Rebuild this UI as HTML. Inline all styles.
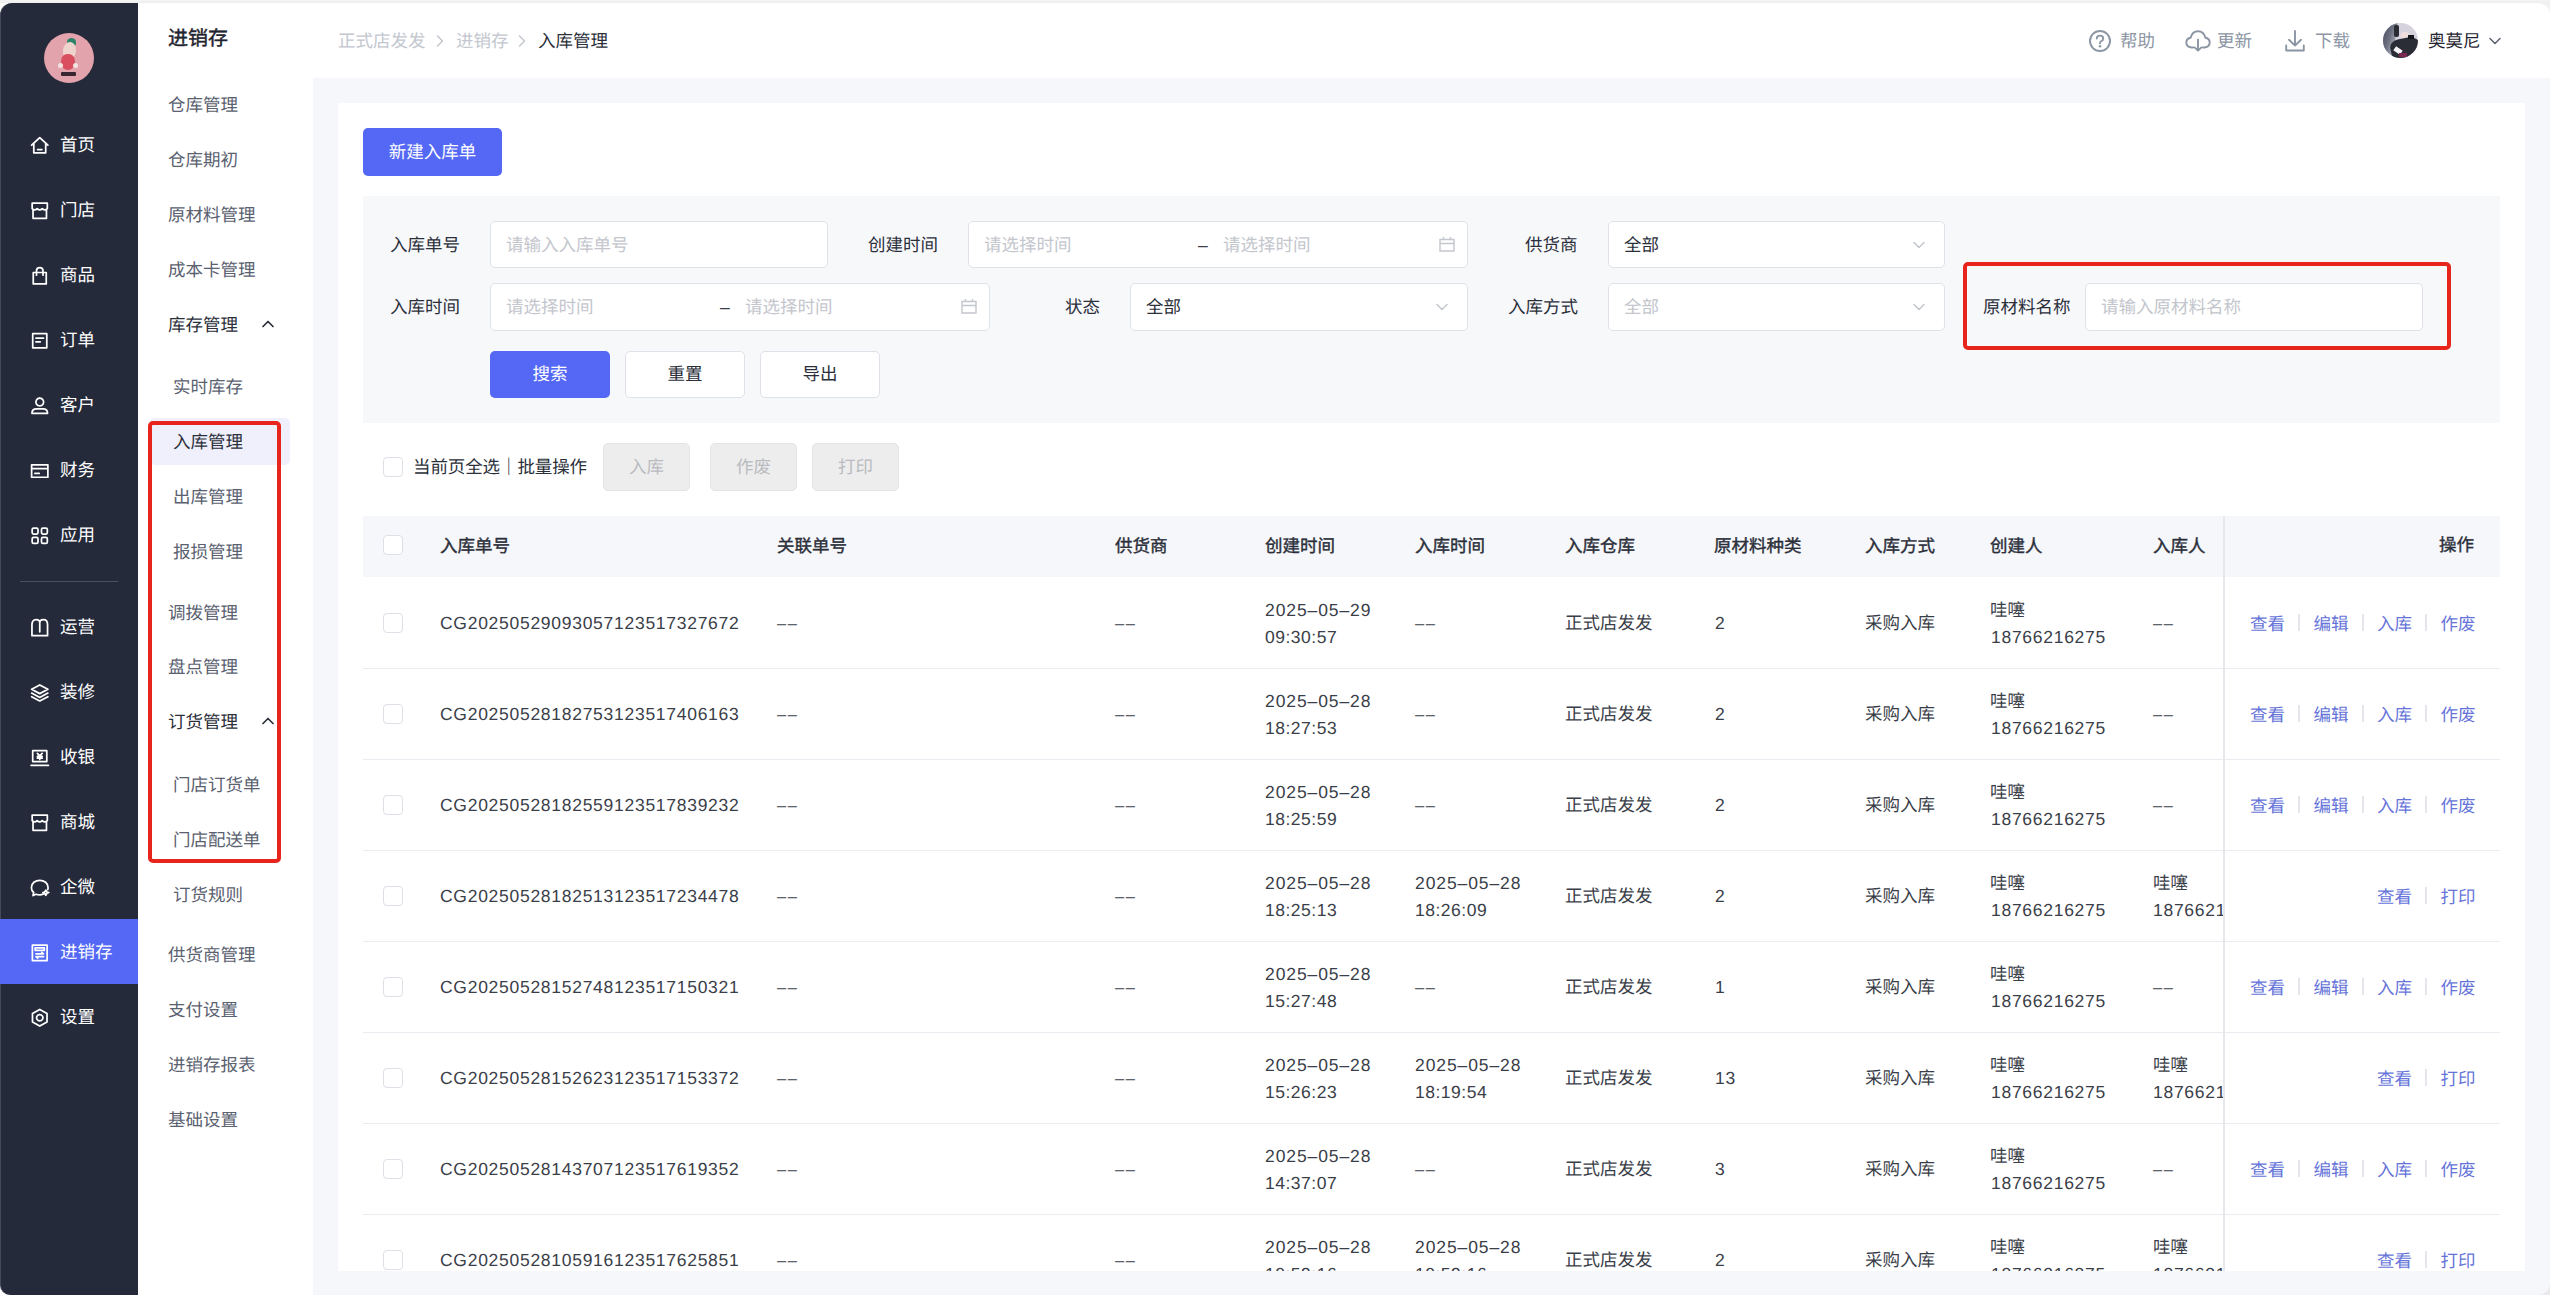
<!DOCTYPE html><html lang="zh-CN"><head><meta charset="utf-8"><title>入库管理</title><style>
*{box-sizing:border-box;margin:0;padding:0}
html,body{width:2550px;height:1295px;overflow:hidden;background:#fff}
body{text-rendering:geometricPrecision;font-family:"Liberation Sans",sans-serif;font-size:17.5px;color:#2b2f3a;position:relative;line-height:1}
.abs{position:absolute}
.t{position:absolute;white-space:nowrap;line-height:24px;height:24px}
#topstrip{left:0;top:0;width:2550px;height:3px;background:linear-gradient(#f4f4f4,#eeeeee)}
#side{left:0;top:3px;width:138px;height:1292px;background:#252a3b;border-left:1px solid #454a5b;border-top-left-radius:12px;border-bottom-left-radius:10px}
#nav2{left:138px;top:3px;width:175px;height:1292px;background:#fff}
#hdr{left:313px;top:3px;width:2237px;height:75px;background:#fff;border-top-right-radius:12px}
#content{left:313px;top:78px;width:2237px;height:1217px;background:#f5f7fa;border-bottom-right-radius:12px}
#card{left:338px;top:103px;width:2187px;height:1168px;background:#fff;overflow:hidden}
.sn{color:#fff;font-size:17.5px}
.n2{color:#5a6170;font-size:17.5px}
.n2.dark{color:#2b2f3a}
.lbl{color:#2b2f3a}
.inp{position:absolute;background:#fff;border:1px solid #dfe2e8;border-radius:5px;height:47px}
.ph{color:#c3c6cd}
.btn{position:absolute;border-radius:5px;height:48px;line-height:48px;text-align:center;font-size:17.5px}
.pri{background:#5468f5;color:#fff}
.def{background:#fff;border:1px solid #dfe2e8;color:#2b2f3a;line-height:45px;height:47px}
.dis{background:#ededed;border:1px solid #e4e4e4;color:#b9bbc0;line-height:46px}
.cb{position:absolute;width:20px;height:20px;border:1px solid #dde0e6;border-radius:4px;background:#fff}
.th{font-weight:500;-webkit-text-stroke:0.4px #2b2f3a;color:#2b2f3a}
.td{color:#3a3e48}
.num{letter-spacing:0.72px}
.lk{color:#6674d9}
.sep{position:absolute;width:2px;height:17px;background:#e4e6ec}
.redbox{position:absolute;border:4px solid #e8251c;border-radius:5px}
svg{position:absolute;overflow:visible}
</style></head><body>
<div class="abs" id="topstrip"></div><div class="abs" style="left:2530px;top:3px;width:20px;height:20px;background:#f1f1f1"></div><div class="abs" style="left:2530px;top:1275px;width:20px;height:20px;background:#e9e9ec"></div>
<div class="abs" id="side"></div><div class="abs" id="nav2"></div><div class="abs" id="hdr"></div><div class="abs" id="content"></div><div class="abs" id="card"></div>
<div class="abs" style="left:44px;top:33px;width:50px;height:50px;border-radius:50%;background:#e2a3ac;overflow:hidden"><div class="abs" style="left:23px;top:5px;width:9px;height:8px;background:#2c8468;border-radius:50% 50% 30% 30%"></div><div class="abs" style="left:19px;top:9px;width:13px;height:17px;background:#efd3cd;border-radius:50% 50% 45% 45%;transform:rotate(8deg)"></div><div class="abs" style="left:17px;top:21px;width:14px;height:16px;background:#d94f5f;border-radius:45% 45% 50% 50%"></div><div class="abs" style="left:14px;top:30px;width:5px;height:5px;background:#f3e3df;border-radius:50%"></div><div class="abs" style="left:29px;top:30px;width:5px;height:5px;background:#f3e3df;border-radius:50%"></div><div class="abs" style="left:17px;top:39px;width:15px;height:4px;background:#3a2630;border-radius:1px"></div></div>
<div class="abs" style="left:0;top:919px;width:138px;height:65px;background:#5468f5"></div>
<div class="abs" style="left:20px;top:581px;width:98px;height:1px;background:#4a4f61"></div>
<svg style="left:30.25px;top:136.25px" width="19.5" height="19.5" viewBox="0 0 18 18"><path fill="none" stroke="#fff" stroke-width="1.6" stroke-linecap="round" stroke-linejoin="round" d="M1.5 8.5 L9 1.5 L16.5 8.5 M3.5 7 V15.5 H14.5 V7 M7 12.5 H11"/></svg>
<div class="t sn" style="left:60px;top:133px;">首页</div>
<svg style="left:30.25px;top:201.25px" width="19.5" height="19.5" viewBox="0 0 18 18"><path fill="none" stroke="#fff" stroke-width="1.6" stroke-linecap="round" stroke-linejoin="round" d="M2 2 H16 V7 M2 2 V7 M2 7 Q4.3 9.5 6.6 7 Q9 9.5 11.3 7 Q13.7 9.5 16 7 M2.8 8.5 V16 H15.2 V8.5"/></svg>
<div class="t sn" style="left:60px;top:198px;">门店</div>
<svg style="left:30.25px;top:266.25px" width="19.5" height="19.5" viewBox="0 0 18 18"><path fill="none" stroke="#fff" stroke-width="1.6" stroke-linecap="round" stroke-linejoin="round" d="M3 6 H15 V16.5 H3 Z M6 8.5 V4.5 Q6 1.5 9 1.5 Q12 1.5 12 4.5 V8.5"/></svg>
<div class="t sn" style="left:60px;top:263px;">商品</div>
<svg style="left:30.25px;top:331.25px" width="19.5" height="19.5" viewBox="0 0 18 18"><path fill="none" stroke="#fff" stroke-width="1.6" stroke-linecap="round" stroke-linejoin="round" d="M2.5 2.5 H15.5 V15.5 H2.5 Z M5.5 6.5 H12.5 M5.5 10 H9.5"/></svg>
<div class="t sn" style="left:60px;top:328px;">订单</div>
<svg style="left:30.25px;top:396.25px" width="19.5" height="19.5" viewBox="0 0 18 18"><path fill="none" stroke="#fff" stroke-width="1.6" stroke-linecap="round" stroke-linejoin="round" d="M9 2 A3.6 3.6 0 1 0 9.01 2 M1.8 16 Q1.8 11.8 6 11.8 H12 Q16.2 11.8 16.2 16 Z"/></svg>
<div class="t sn" style="left:60px;top:393px;">客户</div>
<svg style="left:30.25px;top:461.25px" width="19.5" height="19.5" viewBox="0 0 18 18"><path fill="none" stroke="#fff" stroke-width="1.6" stroke-linecap="round" stroke-linejoin="round" d="M1.5 3.5 H16.5 V15 H1.5 Z M1.5 7 H16.5 M4.5 11.5 H8.5"/></svg>
<div class="t sn" style="left:60px;top:458px;">财务</div>
<svg style="left:30.25px;top:526.25px" width="19.5" height="19.5" viewBox="0 0 18 18"><g fill="none" stroke="#fff" stroke-width="1.6" stroke-linecap="round" stroke-linejoin="round"><rect x="2" y="2" width="5.4" height="5.4" rx="1.3"/><rect x="10.6" y="2" width="5.4" height="5.4" rx="1.3"/><rect x="2" y="10.6" width="5.4" height="5.4" rx="1.3"/><rect x="10.6" y="10.6" width="5.4" height="5.4" rx="1.3"/></g></svg>
<div class="t sn" style="left:60px;top:523px;">应用</div>
<svg style="left:30.25px;top:618.25px" width="19.5" height="19.5" viewBox="0 0 18 18"><path fill="none" stroke="#fff" stroke-width="1.6" stroke-linecap="round" stroke-linejoin="round" d="M1.8 16.3 V6.3 Q1.8 1.6 5.6 1.6 Q9 1.6 9 4.6 Q9 1.6 12.4 1.6 Q16.2 1.6 16.2 6.3 V16.3 Z M9 4.6 V12.8"/></svg>
<div class="t sn" style="left:60px;top:615px;">运营</div>
<svg style="left:30.25px;top:683.25px" width="19.5" height="19.5" viewBox="0 0 18 18"><path fill="none" stroke="#fff" stroke-width="1.6" stroke-linecap="round" stroke-linejoin="round" d="M9 1.8 L16.5 5.8 L9 9.8 L1.5 5.8 Z M1.5 9.3 L9 13.3 L16.5 9.3 M1.5 12.6 L9 16.6 L16.5 12.6"/></svg>
<div class="t sn" style="left:60px;top:680px;">装修</div>
<svg style="left:30.25px;top:748.25px" width="19.5" height="19.5" viewBox="0 0 18 18"><path fill="none" stroke="#fff" stroke-width="1.6" stroke-linecap="round" stroke-linejoin="round" d="M2.5 2.5 H15.5 V12.5 H2.5 Z M1 16 H17 M6.8 5 L9 7.3 L11.2 5 M9 7.3 V10.5 M6.8 7.8 H11.2 M6.8 9.4 H11.2"/></svg>
<div class="t sn" style="left:60px;top:745px;">收银</div>
<svg style="left:30.25px;top:813.25px" width="19.5" height="19.5" viewBox="0 0 18 18"><path fill="none" stroke="#fff" stroke-width="1.6" stroke-linecap="round" stroke-linejoin="round" d="M2 2 H16 V7 M2 2 V7 M2 7 Q4.3 9.5 6.6 7 Q9 9.5 11.3 7 Q13.7 9.5 16 7 M2.8 8.5 V16 H15.2 V8.5"/></svg>
<div class="t sn" style="left:60px;top:810px;">商城</div>
<svg style="left:30.25px;top:878.25px" width="19.5" height="19.5" viewBox="0 0 18 18"><path fill="none" stroke="#fff" stroke-width="1.6" stroke-linecap="round" stroke-linejoin="round" d="M12.5 14.8 Q10.8 15.6 9 15.6 Q7.2 15.6 5.7 15 L2.8 16.2 L3.4 13.4 Q1.3 11.6 1.3 8.9 Q1.3 5.8 3.6 3.9 Q5.9 2.2 9 2.2 Q12.1 2.2 14.4 3.9 Q16.7 5.8 16.7 8.9 Q16.7 9.8 16.4 10.6 M14.6 11.2 L15.7 12.9 L17.4 13.4 L15.7 14 L14.6 15.9 L13.6 14 L11.9 13.4 L13.6 12.9 Z"/></svg>
<div class="t sn" style="left:60px;top:875px;">企微</div>
<svg style="left:30.25px;top:943.25px" width="19.5" height="19.5" viewBox="0 0 18 18"><path fill="none" stroke="#fff" stroke-width="1.6" stroke-linecap="round" stroke-linejoin="round" d="M2.2 2 H15.8 V16.2 H2.2 Z M4.8 4.6 H13.2 V6.8 H4.8 Z M5.5 10 H12.5 L10.9 8.6 M12.5 12.6 H5.5 L7.1 14"/></svg>
<div class="t sn" style="left:60px;top:940px;">进销存</div>
<svg style="left:30.25px;top:1008.25px" width="19.5" height="19.5" viewBox="0 0 18 18"><path fill="none" stroke="#fff" stroke-width="1.6" stroke-linecap="round" stroke-linejoin="round" d="M9 1.3 L15.7 5.1 V12.9 L9 16.7 L2.3 12.9 V5.1 Z M9 6.1 A2.9 2.9 0 1 0 9.01 6.1"/></svg>
<div class="t sn" style="left:60px;top:1005px;">设置</div>
<div class="t " style="left:168px;top:26.5px;font-size:20px;font-weight:500;-webkit-text-stroke:0.45px #1f2430;color:#1f2430">进销存</div>
<div class="abs" style="left:150px;top:418px;width:140px;height:47px;background:#eff0fb;border-radius:5px"></div>
<div class="t n2" style="left:168px;top:93px;">仓库管理</div>
<div class="t n2" style="left:168px;top:148px;">仓库期初</div>
<div class="t n2" style="left:168px;top:203px;">原材料管理</div>
<div class="t n2" style="left:168px;top:258px;">成本卡管理</div>
<div class="t n2 dark" style="left:168px;top:313px;">库存管理</div>
<svg style="left:262px;top:318px" width="12" height="12" viewBox="0 0 12 12"><path d="M1 8.5 L6 3.5 L11 8.5" fill="none" stroke="#2b2f3a" stroke-width="1.7" stroke-linecap="round" stroke-linejoin="round"/></svg>
<div class="t n2" style="left:173px;top:375px;">实时库存</div>
<div class="t n2 dark" style="left:173px;top:430px;">入库管理</div>
<div class="t n2" style="left:173px;top:485px;">出库管理</div>
<div class="t n2" style="left:173px;top:540px;">报损管理</div>
<div class="t n2" style="left:168px;top:601px;">调拨管理</div>
<div class="t n2" style="left:168px;top:655px;">盘点管理</div>
<div class="t n2 dark" style="left:168px;top:710px;">订货管理</div>
<svg style="left:262px;top:715px" width="12" height="12" viewBox="0 0 12 12"><path d="M1 8.5 L6 3.5 L11 8.5" fill="none" stroke="#2b2f3a" stroke-width="1.7" stroke-linecap="round" stroke-linejoin="round"/></svg>
<div class="t n2" style="left:173px;top:773px;">门店订货单</div>
<div class="t n2" style="left:173px;top:828px;">门店配送单</div>
<div class="t n2" style="left:173px;top:883px;">订货规则</div>
<div class="t n2" style="left:168px;top:943px;">供货商管理</div>
<div class="t n2" style="left:168px;top:998px;">支付设置</div>
<div class="t n2" style="left:168px;top:1053px;">进销存报表</div>
<div class="t n2" style="left:168px;top:1108px;">基础设置</div>
<div class="redbox" style="left:148px;top:421px;width:133px;height:442px"></div>
<div class="t " style="left:338px;top:29px;color:#c3c7cf">正式店发发</div>
<div class="t " style="left:456px;top:29px;color:#c3c7cf">进销存</div>
<div class="t " style="left:538px;top:29px;color:#2b2f3a">入库管理</div>
<svg style="left:436px;top:35px" width="8" height="12" viewBox="0 0 8 12"><path d="M1.5 1 L6.5 6 L1.5 11" fill="none" stroke="#c3c7cf" stroke-width="1.5" stroke-linecap="round" stroke-linejoin="round"/></svg>
<svg style="left:518px;top:35px" width="8" height="12" viewBox="0 0 8 12"><path d="M1.5 1 L6.5 6 L1.5 11" fill="none" stroke="#c3c7cf" stroke-width="1.5" stroke-linecap="round" stroke-linejoin="round"/></svg>
<svg style="left:2089px;top:30px" width="22" height="22" viewBox="0 0 22 22"><circle cx="11" cy="11" r="10" fill="none" stroke="#8b95a4" stroke-width="1.9" stroke-linecap="round" stroke-linejoin="round"/><path fill="none" stroke="#8b95a4" stroke-width="1.9" stroke-linecap="round" stroke-linejoin="round" d="M7.8 8.6 Q7.8 5.6 11 5.6 Q14.2 5.6 14.2 8.4 Q14.2 10.2 12.4 11 Q11 11.7 11 13.2"/><circle cx="11" cy="16.2" r="1.2" fill="#8b95a4"/></svg>
<div class="t " style="left:2120px;top:29px;color:#8b95a4">帮助</div>
<svg style="left:2185px;top:30px" width="26" height="22" viewBox="0 0 26 22"><path fill="none" stroke="#8b95a4" stroke-width="1.9" stroke-linecap="round" stroke-linejoin="round" d="M8 17.5 H6.3 Q1.3 17 1.3 12.3 Q1.6 8.3 5.6 7.7 Q7.3 1.3 13 1.3 Q18.7 1.3 20.4 7.7 Q24.4 8.3 24.7 12.3 Q24.7 17 19.7 17.5 H18 M13 9.5 V20.5 M9.6 17.4 L13 20.6 L16.4 17.4"/></svg>
<div class="t " style="left:2217px;top:29px;color:#8b95a4">更新</div>
<svg style="left:2285px;top:30px" width="20" height="22" viewBox="0 0 20 22"><path fill="none" stroke="#8b95a4" stroke-width="1.9" stroke-linecap="round" stroke-linejoin="round" d="M10 1 V15.5 M4 9.8 L10 15.6 L16 9.8 M1.2 15.5 V20.5 H18.8 V15.5"/></svg>
<div class="t " style="left:2315px;top:29px;color:#8b95a4">下载</div>
<div class="abs" style="left:2383px;top:23px;width:35px;height:35px;border-radius:50%;background:#d6d3df;overflow:hidden"><div class="abs" style="left:-4px;top:-2px;width:16px;height:40px;background:linear-gradient(100deg,#3f4454 0,#6b7080 55%,#b9bbc8 100%);transform:rotate(8deg)"></div><div class="abs" style="left:11px;top:2px;width:5px;height:12px;background:#2a2b33;border-radius:2px"></div><div class="abs" style="left:17px;top:9px;width:10px;height:7px;background:#f0dede;border-radius:50%"></div><div class="abs" style="left:8px;top:15px;width:30px;height:24px;background:#2b2d36;border-radius:30% 40% 0 40%;transform:rotate(-12deg)"></div><div class="abs" style="left:11px;top:25px;width:8px;height:5px;background:#f4f4f6;transform:rotate(35deg)"></div><div class="abs" style="left:25px;top:12px;width:6px;height:4px;background:#17181d"></div><div class="abs" style="left:16px;top:30px;width:8px;height:4px;background:#7a2a52"></div></div>
<div class="t " style="left:2428px;top:29px;color:#1f2430">奥莫尼</div>
<svg style="left:2489px;top:37px" width="12" height="8" viewBox="0 0 12 8"><path d="M1 1.5 L6 6.5 L11 1.5" fill="none" stroke="#5a6170" stroke-width="1.5" stroke-linecap="round" stroke-linejoin="round"/></svg>
<div class="btn pri" style="left:363px;top:128px;width:139px">新建入库单</div>
<div class="abs" style="left:363px;top:196px;width:2137px;height:227px;background:#f7f8fa"></div>
<div class="t lbl" style="left:390px;top:233px;">入库单号</div>
<div class="inp" style="left:490px;top:221px;width:338px;height:47px"></div>
<div class="t ph" style="left:506px;top:233px;">请输入入库单号</div>
<div class="t lbl" style="left:868px;top:233px;">创建时间</div>
<div class="inp" style="left:968px;top:221px;width:500px;height:47px"></div>
<div class="t ph" style="left:984px;top:233px;">请选择时间</div>
<div class="t " style="left:1198px;top:233px;color:#3a3e48">–</div>
<div class="t ph" style="left:1223px;top:233px;">请选择时间</div>
<svg style="left:1439px;top:236px" width="16" height="16" viewBox="0 0 16 16"><path fill="none" stroke="#c3c6cd" stroke-width="1.4" d="M1 3.5 H15 V15 H1 Z M1 7.5 H15 M4.5 1 V4 M11.5 1 V4"/></svg>
<div class="t lbl" style="left:1525px;top:233px;">供货商</div>
<div class="inp" style="left:1608px;top:221px;width:337px;height:47px"></div>
<div class="t " style="left:1624px;top:233px;color:#2b2f3a">全部</div>
<svg style="left:1913px;top:241px" width="12" height="8" viewBox="0 0 12 8"><path d="M1 1.5 L6 6.5 L11 1.5" fill="none" stroke="#c3c6cd" stroke-width="1.5" stroke-linecap="round" stroke-linejoin="round"/></svg>
<div class="t lbl" style="left:390px;top:295px;">入库时间</div>
<div class="inp" style="left:490px;top:283px;width:500px;height:48px"></div>
<div class="t ph" style="left:506px;top:295px;">请选择时间</div>
<div class="t " style="left:720px;top:295px;color:#3a3e48">–</div>
<div class="t ph" style="left:745px;top:295px;">请选择时间</div>
<svg style="left:961px;top:298px" width="16" height="16" viewBox="0 0 16 16"><path fill="none" stroke="#c3c6cd" stroke-width="1.4" d="M1 3.5 H15 V15 H1 Z M1 7.5 H15 M4.5 1 V4 M11.5 1 V4"/></svg>
<div class="t lbl" style="left:1065px;top:295px;">状态</div>
<div class="inp" style="left:1130px;top:283px;width:338px;height:48px"></div>
<div class="t " style="left:1146px;top:295px;color:#2b2f3a">全部</div>
<svg style="left:1436px;top:303px" width="12" height="8" viewBox="0 0 12 8"><path d="M1 1.5 L6 6.5 L11 1.5" fill="none" stroke="#c3c6cd" stroke-width="1.5" stroke-linecap="round" stroke-linejoin="round"/></svg>
<div class="t lbl" style="left:1508px;top:295px;">入库方式</div>
<div class="inp" style="left:1608px;top:283px;width:337px;height:48px"></div>
<div class="t ph" style="left:1624px;top:295px;">全部</div>
<svg style="left:1913px;top:303px" width="12" height="8" viewBox="0 0 12 8"><path d="M1 1.5 L6 6.5 L11 1.5" fill="none" stroke="#c3c6cd" stroke-width="1.5" stroke-linecap="round" stroke-linejoin="round"/></svg>
<div class="t lbl" style="left:1983px;top:295px;">原材料名称</div>
<div class="inp" style="left:2085px;top:283px;width:338px;height:48px"></div>
<div class="t ph" style="left:2101px;top:295px;">请输入原材料名称</div>
<div class="redbox" style="left:1963px;top:262px;width:488px;height:88px"></div>
<div class="btn pri" style="left:490px;top:351px;width:120px;height:47px;line-height:47px">搜索</div>
<div class="btn def" style="left:625px;top:351px;width:120px">重置</div>
<div class="btn def" style="left:760px;top:351px;width:120px">导出</div>
<div class="cb" style="left:383px;top:457px"></div>
<div class="t lbl" style="left:413px;top:455px;letter-spacing:-0.1px">当前页全选｜批量操作</div>
<div class="btn dis" style="left:603px;top:443px;width:87px">入库</div>
<div class="btn dis" style="left:710px;top:443px;width:87px">作废</div>
<div class="btn dis" style="left:812px;top:443px;width:87px">打印</div>
<div class="abs" style="left:363px;top:516px;width:2137px;height:61px;background:#f6f7fb"></div>
<div class="cb" style="left:383px;top:535px"></div>
<div class="t th" style="left:440px;top:534px;">入库单号</div>
<div class="t th" style="left:777px;top:534px;">关联单号</div>
<div class="t th" style="left:1115px;top:534px;">供货商</div>
<div class="t th" style="left:1265px;top:534px;">创建时间</div>
<div class="t th" style="left:1415px;top:534px;">入库时间</div>
<div class="t th" style="left:1565px;top:534px;">入库仓库</div>
<div class="t th" style="left:1714px;top:534px;">原材料种类</div>
<div class="t th" style="left:1865px;top:534px;">入库方式</div>
<div class="t th" style="left:1990px;top:534px;">创建人</div>
<div class="t th" style="left:2153px;top:534px;">入库人</div>
<div class="t th" style="right:76px;top:533px;">操作</div>
<div class="abs" style="left:363px;top:577px;width:2137px;height:694px;overflow:hidden">
<div class="abs" style="left:-363px;top:-577px;width:2550px;height:1295px">
<div class="abs" style="left:363px;top:668px;width:2137px;height:1px;background:#eaecf1"></div>
<div class="cb" style="left:383px;top:613px"></div>
<div class="t td num" style="left:440px;top:611px;">CG20250529093057123517327672</div>
<div class="t td" style="left:777px;top:611px;"><span style="font-size:16.5px;letter-spacing:1.6px">––</span></div>
<div class="t td" style="left:1115px;top:611px;"><span style="font-size:16.5px;letter-spacing:1.6px">––</span></div>
<div class="t td num" style="left:1265px;top:598px;letter-spacing:0.9px">2025–05–29</div>
<div class="t td num" style="left:1265px;top:625px;letter-spacing:0.5px">09:30:57</div>
<div class="t td" style="left:1415px;top:611px;"><span style="font-size:16.5px;letter-spacing:1.6px">––</span></div>
<div class="t td" style="left:1565px;top:611px;">正式店发发</div>
<div class="t td num" style="left:1715px;top:611px;">2</div>
<div class="t td" style="left:1865px;top:611px;">采购入库</div>
<div class="t td" style="left:1990px;top:598px;">哇噻</div>
<div class="t td num" style="left:1991px;top:625px;">18766216275</div>
<div class="t td" style="left:2153px;top:611px;"><span style="font-size:16.5px;letter-spacing:1.6px">––</span></div>
<div class="t lk" style="left:2440.5px;top:612px;">作废</div>
<div class="sep" style="left:2425px;top:614px"></div>
<div class="t lk" style="left:2377.0px;top:612px;">入库</div>
<div class="sep" style="left:2361.5px;top:614px"></div>
<div class="t lk" style="left:2313.5px;top:612px;">编辑</div>
<div class="sep" style="left:2298.0px;top:614px"></div>
<div class="t lk" style="left:2250.0px;top:612px;">查看</div>
<div class="abs" style="left:363px;top:759px;width:2137px;height:1px;background:#eaecf1"></div>
<div class="cb" style="left:383px;top:704px"></div>
<div class="t td num" style="left:440px;top:702px;">CG20250528182753123517406163</div>
<div class="t td" style="left:777px;top:702px;"><span style="font-size:16.5px;letter-spacing:1.6px">––</span></div>
<div class="t td" style="left:1115px;top:702px;"><span style="font-size:16.5px;letter-spacing:1.6px">––</span></div>
<div class="t td num" style="left:1265px;top:689px;letter-spacing:0.9px">2025–05–28</div>
<div class="t td num" style="left:1265px;top:716px;letter-spacing:0.5px">18:27:53</div>
<div class="t td" style="left:1415px;top:702px;"><span style="font-size:16.5px;letter-spacing:1.6px">––</span></div>
<div class="t td" style="left:1565px;top:702px;">正式店发发</div>
<div class="t td num" style="left:1715px;top:702px;">2</div>
<div class="t td" style="left:1865px;top:702px;">采购入库</div>
<div class="t td" style="left:1990px;top:689px;">哇噻</div>
<div class="t td num" style="left:1991px;top:716px;">18766216275</div>
<div class="t td" style="left:2153px;top:702px;"><span style="font-size:16.5px;letter-spacing:1.6px">––</span></div>
<div class="t lk" style="left:2440.5px;top:703px;">作废</div>
<div class="sep" style="left:2425px;top:705px"></div>
<div class="t lk" style="left:2377.0px;top:703px;">入库</div>
<div class="sep" style="left:2361.5px;top:705px"></div>
<div class="t lk" style="left:2313.5px;top:703px;">编辑</div>
<div class="sep" style="left:2298.0px;top:705px"></div>
<div class="t lk" style="left:2250.0px;top:703px;">查看</div>
<div class="abs" style="left:363px;top:850px;width:2137px;height:1px;background:#eaecf1"></div>
<div class="cb" style="left:383px;top:795px"></div>
<div class="t td num" style="left:440px;top:793px;">CG20250528182559123517839232</div>
<div class="t td" style="left:777px;top:793px;"><span style="font-size:16.5px;letter-spacing:1.6px">––</span></div>
<div class="t td" style="left:1115px;top:793px;"><span style="font-size:16.5px;letter-spacing:1.6px">––</span></div>
<div class="t td num" style="left:1265px;top:780px;letter-spacing:0.9px">2025–05–28</div>
<div class="t td num" style="left:1265px;top:807px;letter-spacing:0.5px">18:25:59</div>
<div class="t td" style="left:1415px;top:793px;"><span style="font-size:16.5px;letter-spacing:1.6px">––</span></div>
<div class="t td" style="left:1565px;top:793px;">正式店发发</div>
<div class="t td num" style="left:1715px;top:793px;">2</div>
<div class="t td" style="left:1865px;top:793px;">采购入库</div>
<div class="t td" style="left:1990px;top:780px;">哇噻</div>
<div class="t td num" style="left:1991px;top:807px;">18766216275</div>
<div class="t td" style="left:2153px;top:793px;"><span style="font-size:16.5px;letter-spacing:1.6px">––</span></div>
<div class="t lk" style="left:2440.5px;top:794px;">作废</div>
<div class="sep" style="left:2425px;top:796px"></div>
<div class="t lk" style="left:2377.0px;top:794px;">入库</div>
<div class="sep" style="left:2361.5px;top:796px"></div>
<div class="t lk" style="left:2313.5px;top:794px;">编辑</div>
<div class="sep" style="left:2298.0px;top:796px"></div>
<div class="t lk" style="left:2250.0px;top:794px;">查看</div>
<div class="abs" style="left:363px;top:941px;width:2137px;height:1px;background:#eaecf1"></div>
<div class="cb" style="left:383px;top:886px"></div>
<div class="t td num" style="left:440px;top:884px;">CG20250528182513123517234478</div>
<div class="t td" style="left:777px;top:884px;"><span style="font-size:16.5px;letter-spacing:1.6px">––</span></div>
<div class="t td" style="left:1115px;top:884px;"><span style="font-size:16.5px;letter-spacing:1.6px">––</span></div>
<div class="t td num" style="left:1265px;top:871px;letter-spacing:0.9px">2025–05–28</div>
<div class="t td num" style="left:1265px;top:898px;letter-spacing:0.5px">18:25:13</div>
<div class="t td num" style="left:1415px;top:871px;letter-spacing:0.9px">2025–05–28</div>
<div class="t td num" style="left:1415px;top:898px;letter-spacing:0.5px">18:26:09</div>
<div class="t td" style="left:1565px;top:884px;">正式店发发</div>
<div class="t td num" style="left:1715px;top:884px;">2</div>
<div class="t td" style="left:1865px;top:884px;">采购入库</div>
<div class="t td" style="left:1990px;top:871px;">哇噻</div>
<div class="t td num" style="left:1991px;top:898px;">18766216275</div>
<div class="abs" style="left:2153px;top:850px;width:70px;height:90px;overflow:hidden"><div class="t td" style="left:0;top:21px">哇噻</div><div class="t td num" style="left:0;top:48px">18766216275</div></div>
<div class="t lk" style="left:2440.5px;top:885px;">打印</div>
<div class="sep" style="left:2425px;top:887px"></div>
<div class="t lk" style="left:2377.0px;top:885px;">查看</div>
<div class="abs" style="left:363px;top:1032px;width:2137px;height:1px;background:#eaecf1"></div>
<div class="cb" style="left:383px;top:977px"></div>
<div class="t td num" style="left:440px;top:975px;">CG20250528152748123517150321</div>
<div class="t td" style="left:777px;top:975px;"><span style="font-size:16.5px;letter-spacing:1.6px">––</span></div>
<div class="t td" style="left:1115px;top:975px;"><span style="font-size:16.5px;letter-spacing:1.6px">––</span></div>
<div class="t td num" style="left:1265px;top:962px;letter-spacing:0.9px">2025–05–28</div>
<div class="t td num" style="left:1265px;top:989px;letter-spacing:0.5px">15:27:48</div>
<div class="t td" style="left:1415px;top:975px;"><span style="font-size:16.5px;letter-spacing:1.6px">––</span></div>
<div class="t td" style="left:1565px;top:975px;">正式店发发</div>
<div class="t td num" style="left:1715px;top:975px;">1</div>
<div class="t td" style="left:1865px;top:975px;">采购入库</div>
<div class="t td" style="left:1990px;top:962px;">哇噻</div>
<div class="t td num" style="left:1991px;top:989px;">18766216275</div>
<div class="t td" style="left:2153px;top:975px;"><span style="font-size:16.5px;letter-spacing:1.6px">––</span></div>
<div class="t lk" style="left:2440.5px;top:976px;">作废</div>
<div class="sep" style="left:2425px;top:978px"></div>
<div class="t lk" style="left:2377.0px;top:976px;">入库</div>
<div class="sep" style="left:2361.5px;top:978px"></div>
<div class="t lk" style="left:2313.5px;top:976px;">编辑</div>
<div class="sep" style="left:2298.0px;top:978px"></div>
<div class="t lk" style="left:2250.0px;top:976px;">查看</div>
<div class="abs" style="left:363px;top:1123px;width:2137px;height:1px;background:#eaecf1"></div>
<div class="cb" style="left:383px;top:1068px"></div>
<div class="t td num" style="left:440px;top:1066px;">CG20250528152623123517153372</div>
<div class="t td" style="left:777px;top:1066px;"><span style="font-size:16.5px;letter-spacing:1.6px">––</span></div>
<div class="t td" style="left:1115px;top:1066px;"><span style="font-size:16.5px;letter-spacing:1.6px">––</span></div>
<div class="t td num" style="left:1265px;top:1053px;letter-spacing:0.9px">2025–05–28</div>
<div class="t td num" style="left:1265px;top:1080px;letter-spacing:0.5px">15:26:23</div>
<div class="t td num" style="left:1415px;top:1053px;letter-spacing:0.9px">2025–05–28</div>
<div class="t td num" style="left:1415px;top:1080px;letter-spacing:0.5px">18:19:54</div>
<div class="t td" style="left:1565px;top:1066px;">正式店发发</div>
<div class="t td num" style="left:1715px;top:1066px;">13</div>
<div class="t td" style="left:1865px;top:1066px;">采购入库</div>
<div class="t td" style="left:1990px;top:1053px;">哇噻</div>
<div class="t td num" style="left:1991px;top:1080px;">18766216275</div>
<div class="abs" style="left:2153px;top:1032px;width:70px;height:90px;overflow:hidden"><div class="t td" style="left:0;top:21px">哇噻</div><div class="t td num" style="left:0;top:48px">18766216275</div></div>
<div class="t lk" style="left:2440.5px;top:1067px;">打印</div>
<div class="sep" style="left:2425px;top:1069px"></div>
<div class="t lk" style="left:2377.0px;top:1067px;">查看</div>
<div class="abs" style="left:363px;top:1214px;width:2137px;height:1px;background:#eaecf1"></div>
<div class="cb" style="left:383px;top:1159px"></div>
<div class="t td num" style="left:440px;top:1157px;">CG20250528143707123517619352</div>
<div class="t td" style="left:777px;top:1157px;"><span style="font-size:16.5px;letter-spacing:1.6px">––</span></div>
<div class="t td" style="left:1115px;top:1157px;"><span style="font-size:16.5px;letter-spacing:1.6px">––</span></div>
<div class="t td num" style="left:1265px;top:1144px;letter-spacing:0.9px">2025–05–28</div>
<div class="t td num" style="left:1265px;top:1171px;letter-spacing:0.5px">14:37:07</div>
<div class="t td" style="left:1415px;top:1157px;"><span style="font-size:16.5px;letter-spacing:1.6px">––</span></div>
<div class="t td" style="left:1565px;top:1157px;">正式店发发</div>
<div class="t td num" style="left:1715px;top:1157px;">3</div>
<div class="t td" style="left:1865px;top:1157px;">采购入库</div>
<div class="t td" style="left:1990px;top:1144px;">哇噻</div>
<div class="t td num" style="left:1991px;top:1171px;">18766216275</div>
<div class="t td" style="left:2153px;top:1157px;"><span style="font-size:16.5px;letter-spacing:1.6px">––</span></div>
<div class="t lk" style="left:2440.5px;top:1158px;">作废</div>
<div class="sep" style="left:2425px;top:1160px"></div>
<div class="t lk" style="left:2377.0px;top:1158px;">入库</div>
<div class="sep" style="left:2361.5px;top:1160px"></div>
<div class="t lk" style="left:2313.5px;top:1158px;">编辑</div>
<div class="sep" style="left:2298.0px;top:1160px"></div>
<div class="t lk" style="left:2250.0px;top:1158px;">查看</div>
<div class="abs" style="left:363px;top:1305px;width:2137px;height:1px;background:#eaecf1"></div>
<div class="cb" style="left:383px;top:1250px"></div>
<div class="t td num" style="left:440px;top:1248px;">CG20250528105916123517625851</div>
<div class="t td" style="left:777px;top:1248px;"><span style="font-size:16.5px;letter-spacing:1.6px">––</span></div>
<div class="t td" style="left:1115px;top:1248px;"><span style="font-size:16.5px;letter-spacing:1.6px">––</span></div>
<div class="t td num" style="left:1265px;top:1235px;letter-spacing:0.9px">2025–05–28</div>
<div class="t td num" style="left:1265px;top:1262px;letter-spacing:0.5px">10:59:16</div>
<div class="t td num" style="left:1415px;top:1235px;letter-spacing:0.9px">2025–05–28</div>
<div class="t td num" style="left:1415px;top:1262px;letter-spacing:0.5px">10:59:16</div>
<div class="t td" style="left:1565px;top:1248px;">正式店发发</div>
<div class="t td num" style="left:1715px;top:1248px;">2</div>
<div class="t td" style="left:1865px;top:1248px;">采购入库</div>
<div class="t td" style="left:1990px;top:1235px;">哇噻</div>
<div class="t td num" style="left:1991px;top:1262px;">18766216275</div>
<div class="abs" style="left:2153px;top:1214px;width:70px;height:90px;overflow:hidden"><div class="t td" style="left:0;top:21px">哇噻</div><div class="t td num" style="left:0;top:48px">18766216275</div></div>
<div class="t lk" style="left:2440.5px;top:1249px;">打印</div>
<div class="sep" style="left:2425px;top:1251px"></div>
<div class="t lk" style="left:2377.0px;top:1249px;">查看</div>
</div></div>
<div class="abs" style="left:2223px;top:516px;width:2px;height:755px;background:#e6e8ee"></div>
</body></html>
